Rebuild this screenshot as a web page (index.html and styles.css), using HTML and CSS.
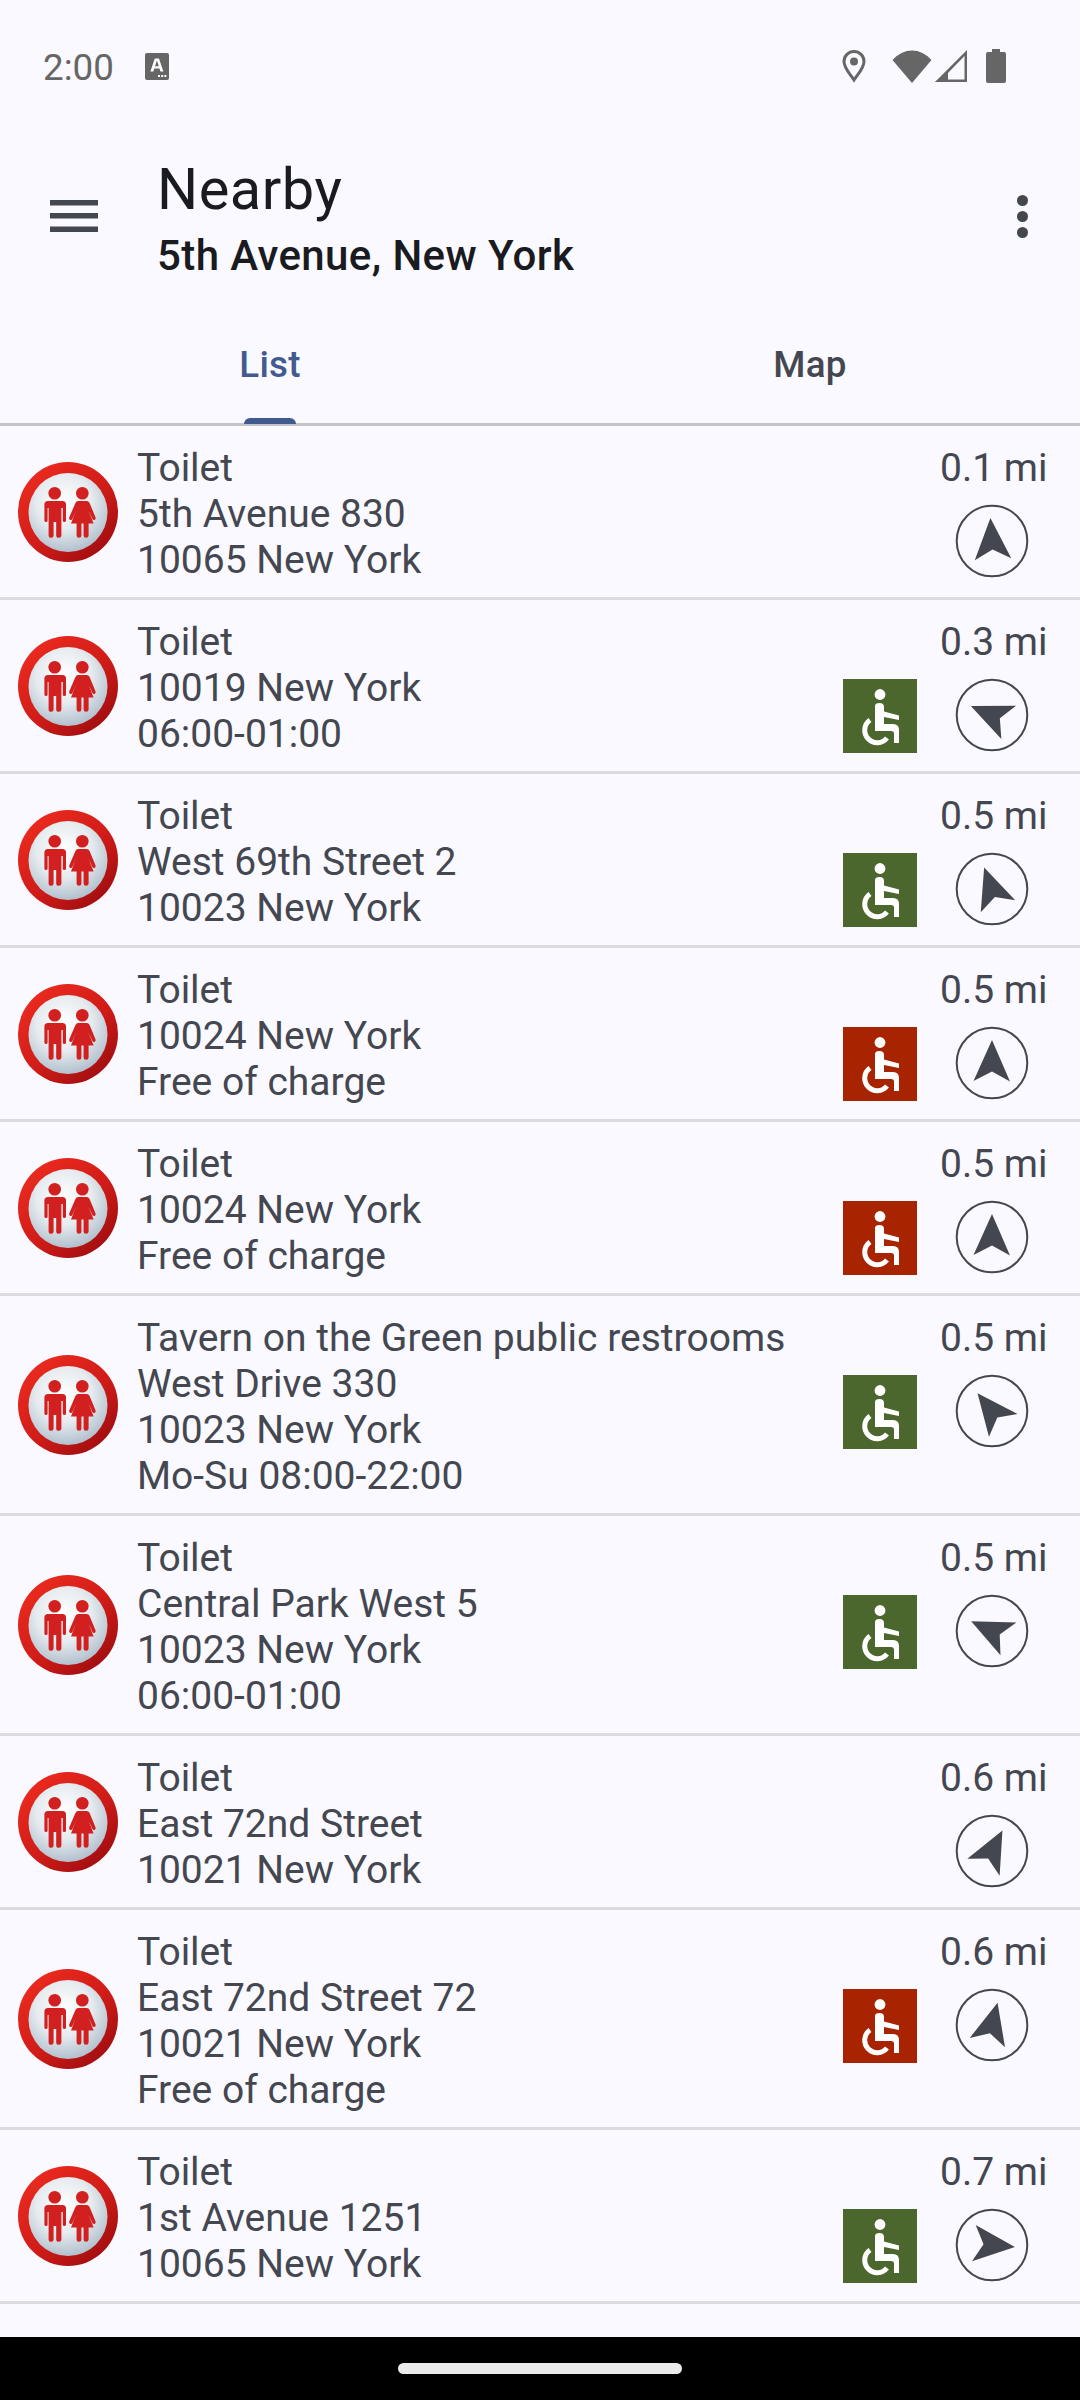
FILE: index.html
```html
<!DOCTYPE html>
<html lang="en">
<head>
  <meta charset="UTF-8">
  <meta name="viewport" content="width=device-width, initial-scale=1.0">
  <title>Nearby</title>
  <link rel="stylesheet" href="styles.css">
</head>
<body>
  <!-- Shared icon shapes -->
  <svg class="defs" width="0" height="0">
    <defs>
      <radialGradient id="faceFill" cx="45%" cy="36%" r="70%">
        <stop offset="0" stop-color="#ffffff"/>
        <stop offset="0.5" stop-color="#e6ebef"/>
        <stop offset="1" stop-color="#a8b8c7"/>
      </radialGradient>
      <linearGradient id="ringFill" x1="0.15" y1="0.1" x2="0.85" y2="0.9">
        <stop offset="0" stop-color="#ea2a1e"/>
        <stop offset="0.55" stop-color="#d01c18"/>
        <stop offset="1" stop-color="#a20e10"/>
      </linearGradient>
      <g id="toilet">
        <circle cx="50" cy="50" r="50" fill="url(#ringFill)"/>
        <circle cx="50" cy="50.5" r="39.5" fill="url(#faceFill)"/>
        <g fill="#d1201f">
          <circle cx="36.7" cy="31.3" r="6.3"/>
          <path d="M30 39 H44.5 Q48 39 48 42.5 V58.5 Q48 60 46.4 60 Q44.8 60 44.8 58.5 V46 H43.4 V73.5 Q43.4 75.8 40.8 75.8 Q38.2 75.8 38.2 73.5 V60 H35.6 V73.5 Q35.6 75.8 33.2 75.8 Q30.6 75.8 30.6 73.5 V46 H29.6 V58.5 Q29.6 60 28 60 Q26.4 60 26.4 58.5 V42.5 Q26.4 39 30 39 Z"/>
          <circle cx="64.3" cy="31.3" r="6.3"/>
          <path d="M60 39 H68.5 Q71 39 72 42 L77.6 55.5 Q78 57.4 76.6 58 Q75.2 58.4 74.4 57 L70.5 48.5 L75.6 61.5 H70.6 V73.5 Q70.6 75.8 68 75.8 Q65.6 75.8 65.6 73.5 V61.5 H63.4 V73.5 Q63.4 75.8 61 75.8 Q58.6 75.8 58.6 73.5 V61.5 H53 L58 48.5 L54.4 57 Q53.6 58.4 52.2 58 Q50.8 57.4 51.2 55.5 L57 42 Q58 39 60 39 Z"/>
        </g>
      </g>
      <g id="wheelchair">
        <circle cx="37" cy="15.5" r="5.4" fill="#fff"/>
        <path fill="#fff" d="M32 27 Q32 24 36.5 24 Q41 24 41 28 V32.5 L56 36.5 V41 L41 38 V45 H50 Q56 45 56 51 V64 H51 V54.5 Q51 52 48 52 H32 Z"/>
        <path fill="none" stroke="#fff" stroke-width="5" d="M27 41 A12.5 12.5 0 1 0 44 59"/>
      </g>
      <path id="arrow" d="M37 14 L55 55.5 L37 45.5 L18.5 55 Z"/>
    </defs>
  </svg>

  <!-- Status bar -->
  <div class="status-bar">
    <span class="clock">2:00</span>
    <svg class="status-a" viewBox="0 0 24 27">
      <rect width="24" height="27" rx="2" fill="#666"/>
      <path fill="#fff" d="M9.8 5.5 H14 L18.4 18.5 H15.4 L14.5 15.6 H9.3 L8.4 18.5 H5.4 Z M10 13.2 H13.8 L11.9 7.6 Z"/>
      <rect x="13" y="22" width="2" height="2" fill="#fff"/><rect x="16.2" y="22" width="2" height="2" fill="#fff"/><rect x="19.4" y="22" width="2" height="2" fill="#fff"/>
    </svg>
    <div class="status-icons">
      <svg class="status-pin" viewBox="0 0 24 33">
        <path fill="none" stroke="#666" stroke-width="3" d="M12 30 C8 24 2 18 2 11.5 A10 10 0 0 1 22 11.5 C22 18 16 24 12 30 Z"/>
        <circle cx="12" cy="11.5" r="4" fill="#666"/>
      </svg>
      <svg class="status-wifi" viewBox="0 0 40 33">
        <path fill="#666" d="M20 33 L0.5 10 Q9 0.5 20 0.5 Q31 0.5 39.5 10 Z"/>
      </svg>
      <svg class="status-signal" viewBox="0 0 32 32">
        <path fill="#666" d="M32 0 V32 H0 Z M29.5 6 L13 23 V29.5 H29.5 Z"/>
        <path fill="#666" d="M13 22 V32 H0 Z"/>
      </svg>
      <svg class="status-battery" viewBox="0 0 20 34">
        <path fill="#666" d="M6 0 H14 V3 H18 Q20 3 20 5 V32 Q20 34 18 34 H2 Q0 34 0 32 V5 Q0 3 2 3 H6 Z"/>
      </svg>
    </div>
  </div>

  <!-- App bar -->
  <header class="app-bar">
    <svg class="menu-icon" viewBox="0 0 48 32">
      <rect y="0" width="48" height="5.5"/><rect y="13" width="48" height="5.5"/><rect y="26.5" width="48" height="5.5"/>
    </svg>
    <div class="titles">
      <div class="title">Nearby</div>
      <div class="subtitle">5th Avenue, New York</div>
    </div>
    <svg class="more-icon" viewBox="0 0 11 43">
      <circle cx="5.5" cy="5.5" r="5.5"/><circle cx="5.5" cy="21.5" r="5.5"/><circle cx="5.5" cy="37.5" r="5.5"/>
    </svg>
  </header>

  <!-- Tabs -->
  <nav class="tabs">
    <div class="tab tab-active">List<span class="tab-mark"></span></div>
    <div class="tab">Map</div>
  </nav>

  <!-- Toilet list -->
  <main class="list">
    <div class="row">
      <svg class="place-icon" viewBox="0 0 100 100"><use href="#toilet"/></svg>
      <div class="lines"><div>Toilet</div><div>5th Avenue 830</div><div>10065 New York</div></div>
      <div class="meta">
        <div class="distance">0.1 mi</div>
        <svg class="nav-icon" viewBox="0 0 74 74"><circle cx="37" cy="37" r="35.3"/><use href="#arrow" transform="rotate(-4 37 37)"/></svg>
      </div>
    </div>
    <div class="row">
      <svg class="place-icon" viewBox="0 0 100 100"><use href="#toilet"/></svg>
      <div class="lines"><div>Toilet</div><div>10019 New York</div><div>06:00-01:00</div></div>
      <div class="meta">
        <div class="distance">0.3 mi</div>
        <svg class="badge badge-ok" viewBox="0 0 74 74"><use href="#wheelchair"/></svg>
        <svg class="nav-icon" viewBox="0 0 74 74"><circle cx="37" cy="37" r="35.3"/><use href="#arrow" transform="rotate(-67 37 37)"/></svg>
      </div>
    </div>
    <div class="row">
      <svg class="place-icon" viewBox="0 0 100 100"><use href="#toilet"/></svg>
      <div class="lines"><div>Toilet</div><div>West 69th Street 2</div><div>10023 New York</div></div>
      <div class="meta">
        <div class="distance">0.5 mi</div>
        <svg class="badge badge-ok" viewBox="0 0 74 74"><use href="#wheelchair"/></svg>
        <svg class="nav-icon" viewBox="0 0 74 74"><circle cx="37" cy="37" r="35.3"/><use href="#arrow" transform="rotate(-20 37 37)"/></svg>
      </div>
    </div>
    <div class="row">
      <svg class="place-icon" viewBox="0 0 100 100"><use href="#toilet"/></svg>
      <div class="lines"><div>Toilet</div><div>10024 New York</div><div>Free of charge</div></div>
      <div class="meta">
        <div class="distance">0.5 mi</div>
        <svg class="badge badge-no" viewBox="0 0 74 74"><use href="#wheelchair"/></svg>
        <svg class="nav-icon" viewBox="0 0 74 74"><circle cx="37" cy="37" r="35.3"/><use href="#arrow"/></svg>
      </div>
    </div>
    <div class="row">
      <svg class="place-icon" viewBox="0 0 100 100"><use href="#toilet"/></svg>
      <div class="lines"><div>Toilet</div><div>10024 New York</div><div>Free of charge</div></div>
      <div class="meta">
        <div class="distance">0.5 mi</div>
        <svg class="badge badge-no" viewBox="0 0 74 74"><use href="#wheelchair"/></svg>
        <svg class="nav-icon" viewBox="0 0 74 74"><circle cx="37" cy="37" r="35.3"/><use href="#arrow"/></svg>
      </div>
    </div>
    <div class="row">
      <svg class="place-icon" viewBox="0 0 100 100"><use href="#toilet"/></svg>
      <div class="lines"><div>Tavern on the Green public restrooms</div><div>West Drive 330</div><div>10023 New York</div><div>Mo-Su 08:00-22:00</div></div>
      <div class="meta">
        <div class="distance">0.5 mi</div>
        <svg class="badge badge-ok" viewBox="0 0 74 74"><use href="#wheelchair"/></svg>
        <svg class="nav-icon" viewBox="0 0 74 74"><circle cx="37" cy="37" r="35.3"/><use href="#arrow" transform="rotate(-39 37 37)"/></svg>
      </div>
    </div>
    <div class="row">
      <svg class="place-icon" viewBox="0 0 100 100"><use href="#toilet"/></svg>
      <div class="lines"><div>Toilet</div><div>Central Park West 5</div><div>10023 New York</div><div>06:00-01:00</div></div>
      <div class="meta">
        <div class="distance">0.5 mi</div>
        <svg class="badge badge-ok" viewBox="0 0 74 74"><use href="#wheelchair"/></svg>
        <svg class="nav-icon" viewBox="0 0 74 74"><circle cx="37" cy="37" r="35.3"/><use href="#arrow" transform="rotate(-65 37 37)"/></svg>
      </div>
    </div>
    <div class="row">
      <svg class="place-icon" viewBox="0 0 100 100"><use href="#toilet"/></svg>
      <div class="lines"><div>Toilet</div><div>East 72nd Street</div><div>10021 New York</div></div>
      <div class="meta">
        <div class="distance">0.6 mi</div>
        <svg class="nav-icon" viewBox="0 0 74 74"><circle cx="37" cy="37" r="35.3"/><use href="#arrow" transform="rotate(27 37 37)"/></svg>
      </div>
    </div>
    <div class="row">
      <svg class="place-icon" viewBox="0 0 100 100"><use href="#toilet"/></svg>
      <div class="lines"><div>Toilet</div><div>East 72nd Street 72</div><div>10021 New York</div><div>Free of charge</div></div>
      <div class="meta">
        <div class="distance">0.6 mi</div>
        <svg class="badge badge-no" viewBox="0 0 74 74"><use href="#wheelchair"/></svg>
        <svg class="nav-icon" viewBox="0 0 74 74"><circle cx="37" cy="37" r="35.3"/><use href="#arrow" transform="rotate(14 37 37)"/></svg>
      </div>
    </div>
    <div class="row">
      <svg class="place-icon" viewBox="0 0 100 100"><use href="#toilet"/></svg>
      <div class="lines"><div>Toilet</div><div>1st Avenue 1251</div><div>10065 New York</div></div>
      <div class="meta">
        <div class="distance">0.7 mi</div>
        <svg class="badge badge-ok" viewBox="0 0 74 74"><use href="#wheelchair"/></svg>
        <svg class="nav-icon" viewBox="0 0 74 74"><circle cx="37" cy="37" r="35.3"/><use href="#arrow" transform="rotate(95 37 37)"/></svg>
      </div>
    </div>
  </main>

  <!-- Gesture bar -->
  <div class="nav-bar"><span class="home-pill"></span></div>
</body>
</html>
```

FILE: styles.css
```css
html, body {
  margin: 0;
  height: 2400px;
}
body {
  display: flex;
  flex-direction: column;
  overflow: hidden;
  background-color: #faf9ff;
  color: #44474f;
  font-family: Roboto, "Liberation Sans", sans-serif;
}
.defs {
  position: absolute;
}

/* Status bar */
.status-bar {
  display: flex;
  flex: none;
  align-items: center;
  height: 132px;
  padding: 0 74px 0 43px;
}
.clock {
  padding-top: 3px;
  font-size: 36.75px;
  color: #666;
}
.status-a {
  width: 24px;
  height: 27px;
  margin-left: 31px;
}
.status-icons {
  display: flex;
  align-items: center;
  margin-left: auto;
}
.status-pin {
  width: 24px;
  height: 33px;
}
.status-wifi {
  width: 40px;
  height: 33px;
  margin-left: 26px;
}
.status-signal {
  width: 32px;
  height: 32px;
  margin-left: 3px;
}
.status-battery {
  width: 20px;
  height: 34px;
  margin-left: 19px;
}

/* App bar */
.app-bar {
  display: flex;
  flex: none;
  align-items: center;
  height: 128px;
  padding: 20px 52px 0 50px;
  color: #1a1b20;
}
.menu-icon {
  width: 48px;
  height: 32px;
  fill: #44474f;
}
.more-icon {
  width: 11px;
  height: 43px;
  margin-left: auto;
  fill: #44474f;
}
.titles {
  margin-top: 9px;
  margin-left: 59px;
}
.title {
  font-size: 57.75px;
  line-height: 68px;
  letter-spacing: 0.5px;
}
.subtitle {
  margin-top: 3px;
  font-size: 42px;
  font-weight: 500;
  line-height: 60px;
  letter-spacing: 0.4px;
}

/* Tabs */
.tabs {
  display: flex;
  flex: none;
  height: 143px;
  border-bottom: 3px solid #c4c5c8;
}
.tab {
  position: relative;
  display: flex;
  justify-content: center;
  align-items: center;
  width: 50%;
  padding-top: 25px;
  box-sizing: border-box;
  font-size: 36.75px;
  font-weight: 500;
  letter-spacing: 0.26px;
}
.tab-active {
  color: #415b90;
}
.tab-mark {
  position: absolute;
  left: 244px;
  bottom: -1px;
  width: 52px;
  height: 6px;
  border-radius: 8px 8px 0 0;
  background-color: #415b90;
}

/* List */
.list {
  flex: 1;
  overflow: hidden;
}
.row {
  display: flex;
  align-items: center;
  padding: 17px 35px 16px 18px;
  border-bottom: 3px solid #dcdce0;
}
.place-icon {
  flex: none;
  width: 100px;
  height: 100px;
  margin-right: 19px;
}
.lines {
  flex: 1;
  padding-top: 2px;
  margin-bottom: -2px;
  font-size: 39px;
  line-height: 46px;
}
.meta {
  display: grid;
  grid-template-columns: 74px 105px;
  grid-template-rows: 46px 74px;
  column-gap: 23px;
  row-gap: 16px;
  align-self: flex-start;
}
.distance {
  grid-column: 2;
  grid-row: 1;
  padding: 2px 1px 0 0;
  font-size: 39px;
  line-height: 46px;
  text-align: right;
  white-space: nowrap;
}
.badge {
  grid-column: 1;
  grid-row: 2;
  width: 74px;
  height: 74px;
}
.badge-ok {
  background-color: #4b672e;
}
.badge-no {
  background-color: #a82400;
}
.nav-icon {
  grid-column: 2;
  grid-row: 2;
  justify-self: center;
  width: 74px;
  height: 74px;
  margin: -1px 2px 1px 0;
  fill: #44474f;
}
.nav-icon circle {
  fill: none;
  stroke: #44474f;
  stroke-width: 2;
}

/* Gesture bar */
.nav-bar {
  display: flex;
  flex: none;
  justify-content: center;
  height: 63px;
  background-color: #000;
}
.home-pill {
  width: 284px;
  height: 11px;
  margin-top: 26px;
  border-radius: 6px;
  background-color: #ebebeb;
}
```
